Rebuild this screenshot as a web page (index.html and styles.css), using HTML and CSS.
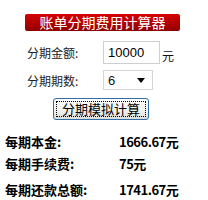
FILE: index.html
```html
<!DOCTYPE html>
<html lang="zh-CN">
<head>
  <meta charset="UTF-8" />
  <title>账单分期费用计算器</title>
  <link rel="stylesheet" href="styles.css">
</head>
<body>
  <div class="title">账单分期费用计算器</div>

  <div class="form">
    <div class="row">
      <label class="label">分期金额:</label>
      <input class="amount" type="text" value="10000">
      <span class="unit">元</span>
    </div>
    <div class="row row-term">
      <label class="label">分期期数:</label>
      <div class="select">
        <span>6</span>
        <svg width="8" height="5" viewBox="0 0 8 5"><path d="M0 0H8L4 5Z" fill="#000"/></svg>
      </div>
    </div>
    <button class="calc">分期模拟计算</button>
  </div>

  <div class="result">
    <div class="line first"><span class="name">每期本金:</span><span class="value">1666.67元</span></div>
    <div class="line second"><span class="name">每期手续费:</span><span class="value">75元</span></div>
    <div class="line third"><span class="name">每期还款总额:</span><span class="value">1741.67元</span></div>
  </div>
</body>
</html>
```

FILE: styles.css
```css
* { box-sizing: border-box; }
body {
  margin: 0;
  background: #fff;
  color: #111;
  font-family: "Noto Sans CJK SC", sans-serif;
}
.title {
  margin: 14px 0 0 25px;
  width: 155px;
  height: 17px;
  line-height: 17px;
  background: linear-gradient(#d40404, #b00000 55%, #8e0000);
  border-radius: 2px;
  color: #fff;
  font-size: 14px;
  text-align: center;
}
.form {
  padding-left: 27px;
}
.row {
  display: flex;
  align-items: center;
  margin-top: 10px;
}
.row-term {
  margin-top: 6px;
}
.label {
  width: 76px;
  font-size: 12px;
  color: #222;
}
.amount {
  width: 57px;
  height: 23px;
  border: 1px solid #cfcfcf;
  padding: 0 0 0 4px;
  font-family: "Liberation Sans", Arial, sans-serif;
  font-size: 13px;
  color: #000;
}
.unit {
  margin: 6px 0 0 2px;
  font-size: 12px;
}
.select {
  width: 50px;
  height: 20px;
  border: 1px solid #d6d6d6;
  display: flex;
  align-items: center;
  justify-content: space-between;
  padding: 0 7px 0 4px;
  font-family: "Liberation Sans", Arial, sans-serif;
  font-size: 13px;
}
.calc {
  margin: 8px 0 0 26px;
  width: 96px;
  height: 22px;
  border: 1px solid #2f6ea6;
  border-radius: 3px;
  background: linear-gradient(#fefefe, #f0f0ee 60%, #dcdcd8);
  outline: 1px dotted #000;
  outline-offset: -4px;
  font-family: "Noto Sans CJK SC", sans-serif;
  font-size: 13px;
  line-height: 16px;
  padding: 0;
  color: #000;
}
.result {
  padding-left: 5px;
}
.line {
  display: flex;
  font-size: 13px;
  font-weight: bold;
  line-height: 18px;
  color: #000;
}
.first { margin-top: 13px; }
.second { margin-top: 4px; }
.third { margin-top: 8px; }
.name {
  width: 114px;
}
.value {
  letter-spacing: -0.5px;
}
```
